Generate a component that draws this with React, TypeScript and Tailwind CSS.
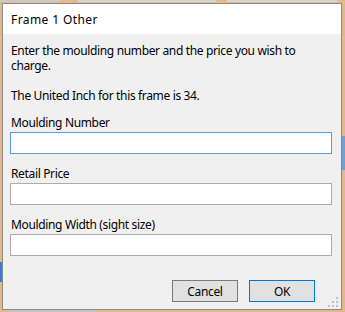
const font = { fontFamily: '"Noto Sans", "Segoe UI", sans-serif' };

function Field({ label, focused }: { label: string; focused?: boolean }) {
  return (
    <div className="flex flex-col gap-[2px]">
      <div className="pl-px leading-[15px]">{label}</div>
      <div
        className={
          "h-[22px] w-[322px] bg-white border " +
          (focused ? "border-[#569de5]" : "border-[#acacac]")
        }
      />
    </div>
  );
}

function Grip() {
  return (
    <svg
      className="absolute right-[3px] bottom-[2px]"
      width="10"
      height="10"
      viewBox="0 0 10 10"
      fill="#b8c4d4"
    >
      <rect x="8" y="0" width="2" height="2" />
      <rect x="4" y="4" width="2" height="2" />
      <rect x="8" y="4" width="2" height="2" />
      <rect x="0" y="8" width="2" height="2" />
      <rect x="4" y="8" width="2" height="2" />
      <rect x="8" y="8" width="2" height="2" />
    </svg>
  );
}

export default function App() {
  return (
    <div
      className="relative h-[312px] w-[345px] overflow-hidden bg-[#e2b98c] pl-[2px] pt-[3px] text-[12px] text-black"
      style={font}
    >
      {/* bits of the app window behind the dialog */}
      <div className="absolute left-0 top-0 flex h-[2px] w-full gap-[3px]">
        <div className="w-[60px] bg-[#c9c9c9]" />
        <div className="ml-[15px] w-[138px] bg-[#d6d6d6]" />
        <div className="ml-[8px] w-[110px] bg-[#d6d6d6]" />
      </div>
      <div className="absolute right-0 top-[136px] h-[34px] w-[4px] bg-[#6d9fd8]" />
      <div className="absolute left-0 top-[262px] h-[20px] w-[2px] bg-[#3b78d8]" />
      <div className="absolute bottom-0 left-[8px] h-[2px] w-[88px] bg-[#c4c4c4]" />

      <div className="relative flex h-[307px] w-[340px] flex-col border border-[#8a8a8a] bg-[#f0f0f0]">
        <div className="flex h-[30px] items-center bg-white pl-[8px] pt-px leading-[15px] tracking-[0.4px]">
          Frame 1 Other
        </div>

        <div className="flex flex-col pl-[7px] pt-[9px] tracking-[-0.35px]">
          <div className="pl-px leading-[15px]">
            <div>Enter the moulding number and the price you wish to</div>
            <div>charge.</div>
            <div className="mt-[15px]">The United Inch for this frame is 34.</div>
          </div>

          <div className="mt-[12px] flex flex-col gap-[12px]">
            <Field label="Moulding Number" focused />
            <Field label="Retail Price" />
            <Field label="Moulding Width (sight size)" />
          </div>

          <div className="mt-[24px] flex gap-[11px] pl-[162px]">
            <button className="h-[22px] w-[66px] border border-[#7a7a7a] bg-[#e1e1e1] leading-[15px]">
              Cancel
            </button>
            <button className="h-[22px] w-[66px] border border-[#0078d7] bg-[#e1e1e1] leading-[15px]">
              OK
            </button>
          </div>
        </div>

        <Grip />
      </div>
    </div>
  );
}
